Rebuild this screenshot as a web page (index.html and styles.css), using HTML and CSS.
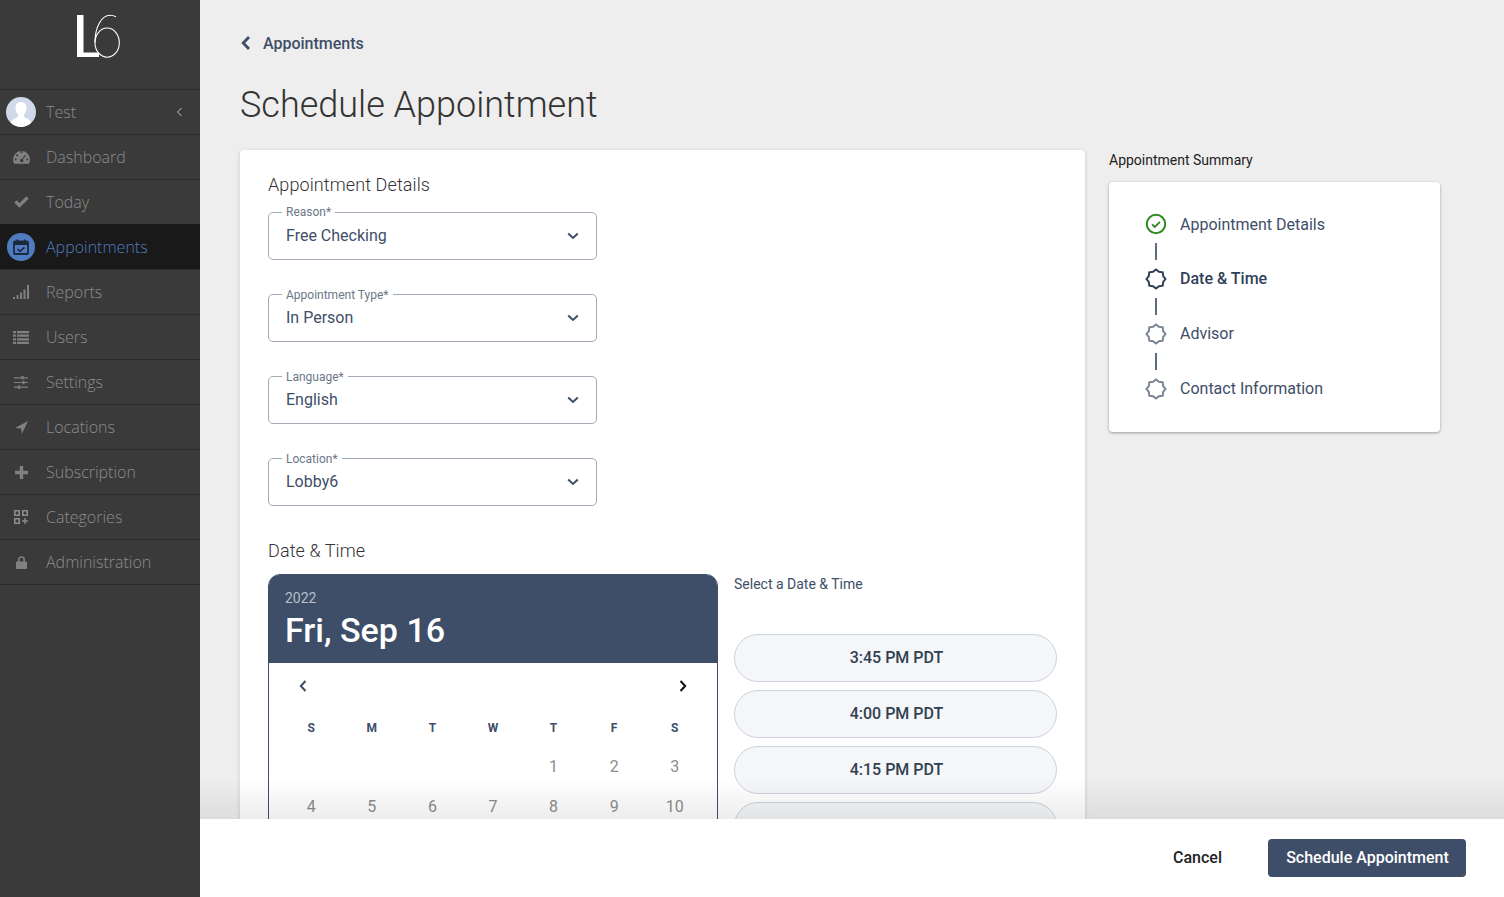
FILE: index.html

```html
<!DOCTYPE html>
<html lang="en">
<head>
    <meta charset="UTF-8">
    <meta name="viewport" content="width=device-width, initial-scale=1.0">
    <title>Schedule Appointment</title>
    <link rel="stylesheet" href="styles.css">
</head>
<body>
    <svg class="defs" width="0" height="0" aria-hidden="true">
        <symbol id="step" viewBox="0 0 24 24">
            <polygon points="21.5,12 19.2,14.98 18.72,18.72 14.98,19.2 12,21.5 9.02,19.2 5.28,18.72 4.8,14.98 2.5,12 4.8,9.02 5.28,5.28 9.02,4.8 12,2.5 14.98,4.8 18.72,5.28 19.2,9.02" fill="none" stroke="currentColor" stroke-width="2"/>
        </symbol>
        <symbol id="chevron-down" viewBox="0 0 12 8">
            <path d="M1.2 1.5 6 6l4.800-4.500" fill="none" stroke="currentColor" stroke-width="2"/>
        </symbol>
    </svg>

    <aside class="sidebar">
        <div class="logo">
            <svg width="50" height="46" viewBox="0 0 50 46" role="img" aria-label="L6">
                <path d="M2 2h6.500v37.500H24V44H2z" fill="#fff"/>
                <path d="M41 3.700C39 2.600 37 2.200 35 2.200 27 2.200 20 13 20 29.600" fill="none" stroke="#fff" stroke-width="1.100"/>
                <ellipse cx="32.150" cy="29.650" rx="12.150" ry="14.600" fill="none" stroke="#fff" stroke-width="1.100"/>
            </svg>
        </div>
        <nav>
            <a class="nav-item" href="#">
                <span class="nav-icon">
                    <svg class="avatar" width="30" height="30" viewBox="0 0 30 30">
                        <circle cx="15" cy="15" r="15" fill="#d0d9e9"/>
                        <path d="M15 5c-3.600 0-5.500 2.700-5.500 6 0 2.600 1 5 2.500 6.500v2.300C9.500 21.500 6 22.300 4.800 25.800A15 15 0 0 0 15 30a15 15 0 0 0 10.200-4.200C24 22.300 20.500 21.500 18 19.800v-2.300c1.500-1.500 2.500-3.900 2.500-6.500 0-3.300-1.900-6-5.500-6z" fill="#fff"/>
                    </svg>
                </span>
                <span>Test</span>
                <svg class="collapse" width="7" height="10" viewBox="0 0 7 10"><path d="M5.500 1 1.500 5l4 4" fill="none" stroke="#8a8a8a" stroke-width="1.200"/></svg>
            </a>
            <a class="nav-item" href="#">
                <span class="nav-icon">
                    <svg width="17" height="13" viewBox="0 0 17 13"><path fill-rule="evenodd" d="M8.500 0A8.500 8.500 0 0 0 0 8.500c0 1.600.4 3 1.200 4.300h14.600A8.300 8.300 0 0 0 17 8.500 8.500 8.500 0 0 0 8.500 0zM8 2a1 1 0 1 1 1 0 1 1 0 0 1-1 0zM3.200 4.300a1 1 0 1 1 1.500 1 1 1 0 0 1-1.500-1zM1.700 8.500a1 1 0 1 1 2 0 1 1 0 0 1-2 0zm11.600 0a1 1 0 1 1 2 0 1 1 0 0 1-2 0zM12 3.700l.9.500-3 4.300a1.600 1.600 0 1 1-.9-.5z" fill="#808080"/></svg>
                </span>
                <span>Dashboard</span>
            </a>
            <a class="nav-item" href="#">
                <span class="nav-icon">
                    <svg width="15" height="12" viewBox="0 0 15 12"><path d="M1.500 5.500 5.500 9.500l8-8" fill="none" stroke="#808080" stroke-width="3.200"/></svg>
                </span>
                <span>Today</span>
            </a>
            <a class="nav-item active" href="#">
                <span class="nav-icon">
                    <svg width="28" height="28" viewBox="0 0 28 28">
                        <circle cx="14" cy="14" r="14" fill="#4f7cc0"/>
                        <path d="M8 8.500h12a1 1 0 0 1 1 1V20a1 1 0 0 1-1 1H8a1 1 0 0 1-1-1V9.500a1 1 0 0 1 1-1z" fill="none" stroke="#1c2a3f" stroke-width="1.800"/>
                        <path d="M7 9h14v3H7zM9.500 6.500h1.600V9H9.500zM16.900 6.500h1.600V9h-1.600z" fill="#1c2a3f"/>
                        <path d="m10.500 16 2.500 2.400 4.500-4" fill="none" stroke="#1c2a3f" stroke-width="1.600"/>
                    </svg>
                </span>
                <span>Appointments</span>
            </a>
            <a class="nav-item" href="#">
                <span class="nav-icon">
                    <svg width="16" height="14" viewBox="0 0 16 14"><path d="M0 12h2v2H0zM3.500 10h2v4h-2zM7 7.500h2V14H7zM10.500 4.500h2V14h-2zM14 0h2v14h-2z" fill="#808080"/></svg>
                </span>
                <span>Reports</span>
            </a>
            <a class="nav-item" href="#">
                <span class="nav-icon">
                    <svg width="16" height="13" viewBox="0 0 16 13"><path d="M0 0h3v2.200H0zM4 0h12v2.200H4zM0 3.600h3v2.200H0zM4 3.600h12v2.200H4zM0 7.200h3v2.200H0zM4 7.200h12v2.200H4zM0 10.800h3V13H0zM4 10.800h12V13H4z" fill="#808080"/></svg>
                </span>
                <span>Users</span>
            </a>
            <a class="nav-item" href="#">
                <span class="nav-icon">
                    <svg width="14" height="13" viewBox="0 0 14 13"><path d="M0 1.800h14M0 6.500h14M0 11.200h14" stroke="#808080" stroke-width="1.200"/><path d="M7.500 0h2v3.500h-2zM8.500 4.700h2v3.500h-2zM4 9.500h2V13H4z" fill="#808080"/></svg>
                </span>
                <span>Settings</span>
            </a>
            <a class="nav-item" href="#">
                <span class="nav-icon">
                    <svg width="13" height="13" viewBox="0 0 13 13"><path d="M13 0 0 7l6 .5L6.800 13z" fill="#808080"/></svg>
                </span>
                <span>Locations</span>
            </a>
            <a class="nav-item" href="#">
                <span class="nav-icon">
                    <svg width="13" height="13" viewBox="0 0 13 13"><path d="M4.800 0h3.400v4.800H13v3.400H8.200V13H4.800V8.200H0V4.800h4.800z" fill="#808080"/></svg>
                </span>
                <span>Subscription</span>
            </a>
            <a class="nav-item" href="#">
                <span class="nav-icon">
                    <svg width="14" height="14" viewBox="0 0 14 14"><path d="M.8.800h4.400v4.400H.8zM8.800.800h4.400v4.400H8.800zM.8 8.800h4.400v4.400H.8z" fill="none" stroke="#8c8c8c" stroke-width="1.600"/><path d="M10.300 8h1.400v2.300H14v1.400h-2.300V14h-1.400v-2.300H8v-1.400h2.300z" fill="#8c8c8c"/></svg>
                </span>
                <span>Categories</span>
            </a>
            <a class="nav-item" href="#">
                <span class="nav-icon">
                    <svg width="11" height="13" viewBox="0 0 11 13"><path d="M1 5.500h9a1 1 0 0 1 1 1V12a1 1 0 0 1-1 1H1a1 1 0 0 1-1-1V6.500a1 1 0 0 1 1-1z" fill="#808080"/><path d="M2.800 6V3.700a2.700 2.700 0 0 1 5.400 0V6" fill="none" stroke="#808080" stroke-width="1.600"/></svg>
                </span>
                <span>Administration</span>
            </a>
        </nav>
    </aside>

    <main class="content">
        <a class="back-link" href="#">
            <svg width="11" height="16" viewBox="0 0 11 16"><path d="M9 2 3.200 8 9 14" fill="none" stroke="#3e4e68" stroke-width="2.800"/></svg>
            <span>Appointments</span>
        </a>
        <h1 class="page-title">Schedule Appointment</h1>

        <div class="columns">
            <section class="card">
                <h2 class="section-title">Appointment Details</h2>
                <div class="fields">
                    <div class="field">
                        <label>Reason*</label>
                        <span>Free Checking</span>
                        <svg width="12" height="8"><use href="#chevron-down"/></svg>
                    </div>
                    <div class="field">
                        <label>Appointment Type*</label>
                        <span>In Person</span>
                        <svg width="12" height="8"><use href="#chevron-down"/></svg>
                    </div>
                    <div class="field">
                        <label>Language*</label>
                        <span>English</span>
                        <svg width="12" height="8"><use href="#chevron-down"/></svg>
                    </div>
                    <div class="field">
                        <label>Location*</label>
                        <span>Lobby6</span>
                        <svg width="12" height="8"><use href="#chevron-down"/></svg>
                    </div>
                </div>

                <h2 class="section-title date-title">Date &amp; Time</h2>
                <div class="date-row">
                    <div class="calendar">
                        <div class="calendar-head">
                            <div class="calendar-year">2022</div>
                            <div class="calendar-date">Fri, Sep 16</div>
                        </div>
                        <div class="calendar-nav">
                            <svg width="8" height="12" viewBox="0 0 8 12"><path d="M6.500 1 1.800 6l4.700 5" fill="none" stroke="#3e4e68" stroke-width="2"/></svg>
                            <svg width="8" height="12" viewBox="0 0 8 12"><path d="M1.500 1l4.700 5-4.700 5" fill="none" stroke="#111" stroke-width="2"/></svg>
                        </div>
                        <div class="calendar-grid">
                            <div class="weekday">S</div><div class="weekday">M</div><div class="weekday">T</div><div class="weekday">W</div><div class="weekday">T</div><div class="weekday">F</div><div class="weekday">S</div>
                            <div></div><div></div><div></div><div></div><div class="day">1</div><div class="day">2</div><div class="day">3</div>
                            <div class="day">4</div><div class="day">5</div><div class="day">6</div><div class="day">7</div><div class="day">8</div><div class="day">9</div><div class="day">10</div>
                        </div>
                    </div>
                    <div class="times">
                        <div class="times-label">Select a Date &amp; Time</div>
                        <button class="time-btn">3:45 PM PDT</button>
                        <button class="time-btn">4:00 PM PDT</button>
                        <button class="time-btn">4:15 PM PDT</button>
                        <button class="time-btn">4:30 PM PDT</button>
                    </div>
                </div>
            </section>

            <section class="summary">
                <h3 class="summary-title">Appointment Summary</h3>
                <div class="summary-card">
                    <div class="step">
                        <svg class="step-done" width="24" height="24" viewBox="0 0 24 24"><circle cx="12" cy="12" r="9.200" fill="none" stroke="#2e8b1e" stroke-width="2"/><path d="m8 12.300 2.800 2.700 5.200-5.200" fill="none" stroke="#2e8b1e" stroke-width="1.800"/></svg>
                        <span>Appointment Details</span>
                    </div>
                    <div class="step-line"></div>
                    <div class="step current">
                        <svg width="24" height="24"><use href="#step"/></svg>
                        <span>Date &amp; Time</span>
                    </div>
                    <div class="step-line"></div>
                    <div class="step">
                        <svg class="step-todo" width="24" height="24"><use href="#step"/></svg>
                        <span>Advisor</span>
                    </div>
                    <div class="step-line"></div>
                    <div class="step">
                        <svg class="step-todo" width="24" height="24"><use href="#step"/></svg>
                        <span>Contact Information</span>
                    </div>
                </div>
            </section>
        </div>
    </main>

    <footer class="action-bar">
        <button class="cancel-btn">Cancel</button>
        <button class="submit-btn">Schedule Appointment</button>
    </footer>
</body>
</html>
```

FILE: styles.css

```css
html, body {
    height: 100%;
}
body {
    margin: 0;
    display: flex;
    overflow: hidden;
    background-color: #eeeeee;
    font-family: Roboto, "Liberation Sans", sans-serif;
    color: #3e4e68;
}
a {
    text-decoration: none;
}
button {
    font-family: inherit;
    cursor: pointer;
}
.defs {
    position: absolute;
}

/* sidebar */
.sidebar {
    width: 200px;
    flex-shrink: 0;
    background-color: #3a3a3a;
    font-family: "Open Sans", sans-serif;
    font-weight: 300;
    font-size: 16px;
}
.logo {
    height: 89px;
    display: flex;
    justify-content: center;
    padding-top: 13px;
    box-sizing: border-box;
}
.nav-item {
    height: 45px;
    box-sizing: border-box;
    display: flex;
    align-items: center;
    border-top: 1px solid #2c2c2c;
    color: #8c8c8c;
}
.nav-item:last-child {
    height: 46px;
    border-bottom: 1px solid #2c2c2c;
}
.nav-item.active {
    background-color: #191919;
    border-top-color: #191919;
    color: #4f7cc0;
}
.nav-icon {
    width: 42px;
    margin-right: 4px;
    display: flex;
    justify-content: center;
    align-items: center;
}
.collapse {
    margin-left: auto;
    margin-right: 17px;
}

/* main area */
.content {
    flex: 1;
    min-width: 0;
    padding: 32px 64px 0 40px;
    overflow: hidden;
}
.back-link {
    display: flex;
    align-items: center;
    gap: 12px;
    height: 22px;
    font-size: 16px;
    font-weight: 500;
    color: #3e4e68;
}
.page-title {
    margin: 29px 0 23px;
    font-size: 36px;
    line-height: 44px;
    font-weight: 300;
    color: #333333;
}
.columns {
    display: grid;
    grid-template-columns: 845px 331px;
    gap: 24px;
    align-items: start;
}
.card {
    background: white;
    border-radius: 4px;
    box-shadow: 0 1px 4px rgba(0, 0, 0, 0.16);
    padding: 24px 28px 40px;
}
.section-title {
    margin: 0;
    font-size: 18px;
    line-height: 22px;
    font-weight: 300;
    letter-spacing: 0.1px;
    color: #333333;
}
.fields {
    margin-top: 16px;
    width: 329px;
    display: flex;
    flex-direction: column;
    gap: 34px;
}
.field {
    position: relative;
    height: 48px;
    box-sizing: border-box;
    border: 1px solid #a3aab6;
    border-radius: 5px;
    padding: 0 17px 2px;
    display: flex;
    align-items: center;
    justify-content: space-between;
    font-size: 16px;
    color: #3e4e68;
}
.field svg {
    color: #3e4e68;
    margin-top: 2px;
}
.field label {
    position: absolute;
    top: -7px;
    left: 13px;
    padding: 0 4px;
    background: white;
    font-size: 12px;
    line-height: 14px;
    color: #6b7688;
}
.field:first-child label {
    top: -8px;
}
.date-title {
    margin-top: 34px;
}
.date-row {
    margin-top: 12px;
    display: flex;
    gap: 16px;
}

/* calendar */
.calendar {
    width: 450px;
    box-sizing: border-box;
    border: 1px solid #3e4e68;
    border-radius: 12px 12px 0 0;
}
.calendar-head {
    height: 88px;
    background-color: #3e4e68;
    border-radius: 10px 10px 0 0;
    padding: 14px 16px 0;
    box-sizing: border-box;
    color: white;
}
.calendar-year {
    font-size: 14px;
    line-height: 18px;
    padding-bottom: 1px;
    color: #b8bfca;
}
.calendar-date {
    font-size: 34px;
    line-height: 44px;
    font-weight: 500;
}
.calendar-nav {
    height: 46px;
    display: flex;
    align-items: center;
    justify-content: space-between;
    padding: 0 30px;
}
.calendar-grid {
    display: grid;
    grid-template-columns: repeat(7, 1fr);
    padding: 1px 12px 0;
    text-align: center;
}
.weekday {
    height: 37px;
    line-height: 37px;
    font-size: 12px;
    font-weight: 700;
    color: #3e4e68;
}
.day {
    height: 40px;
    line-height: 40px;
    font-size: 16px;
    color: #8d8d8d;
}

/* time slots */
.times {
    width: 323px;
    display: flex;
    flex-direction: column;
    gap: 8px;
}
.times-label {
    height: 52px;
    padding-top: 2px;
    font-size: 14px;
    line-height: 16px;
    box-sizing: border-box;
}
.time-btn {
    height: 48px;
    border: 1px solid #cdd3dc;
    border-radius: 24px;
    background-color: #f4f6fa;
    padding: 0 0 2px 2px;
    font-size: 16px;
    font-weight: 500;
    color: #323f4e;
}

/* summary */
.summary-title {
    margin: 0 0 12px;
    font-size: 14px;
    line-height: 20px;
    font-weight: 400;
    color: #222222;
}
.summary-card {
    background: white;
    border-radius: 4px;
    box-shadow: 0 1px 3px rgba(0, 0, 0, 0.35);
    height: 250px;
    box-sizing: border-box;
    padding: 31px 36px 0;
}
.step {
    height: 22px;
    display: flex;
    align-items: center;
    gap: 12px;
    margin-left: -1px;
    font-size: 16px;
    color: #3e4e68;
}
.step-line + .step span {
    padding-bottom: 2px;
}
.step.current {
    font-weight: 500;
    color: #323f5a;
}
.step-todo {
    color: #7a8494;
}
.step-line {
    width: 2px;
    height: 17px;
    margin: 8px 0 8px 10px;
    background-color: #5f6b80;
}

/* bottom bar */
.action-bar {
    position: fixed;
    left: 200px;
    right: 0;
    bottom: 0;
    height: 78px;
    background: white;
    display: flex;
    align-items: center;
    justify-content: flex-end;
    padding-right: 38px;
    gap: 46px;
}
.action-bar::before {
    content: "";
    position: absolute;
    left: 0;
    right: 0;
    top: -40px;
    height: 40px;
    background: linear-gradient(rgba(0, 0, 0, 0), rgba(0, 0, 0, 0.07));
    pointer-events: none;
}
.cancel-btn {
    border: none;
    background: none;
    padding: 0 0 2px;
    font-size: 16px;
    font-weight: 500;
    color: #222222;
}
.submit-btn {
    width: 198px;
    height: 38px;
    border: none;
    border-radius: 4px;
    background-color: #3e4e68;
    padding: 0 0 2px 1px;
    font-size: 16px;
    font-weight: 500;
    color: white;
}
```
